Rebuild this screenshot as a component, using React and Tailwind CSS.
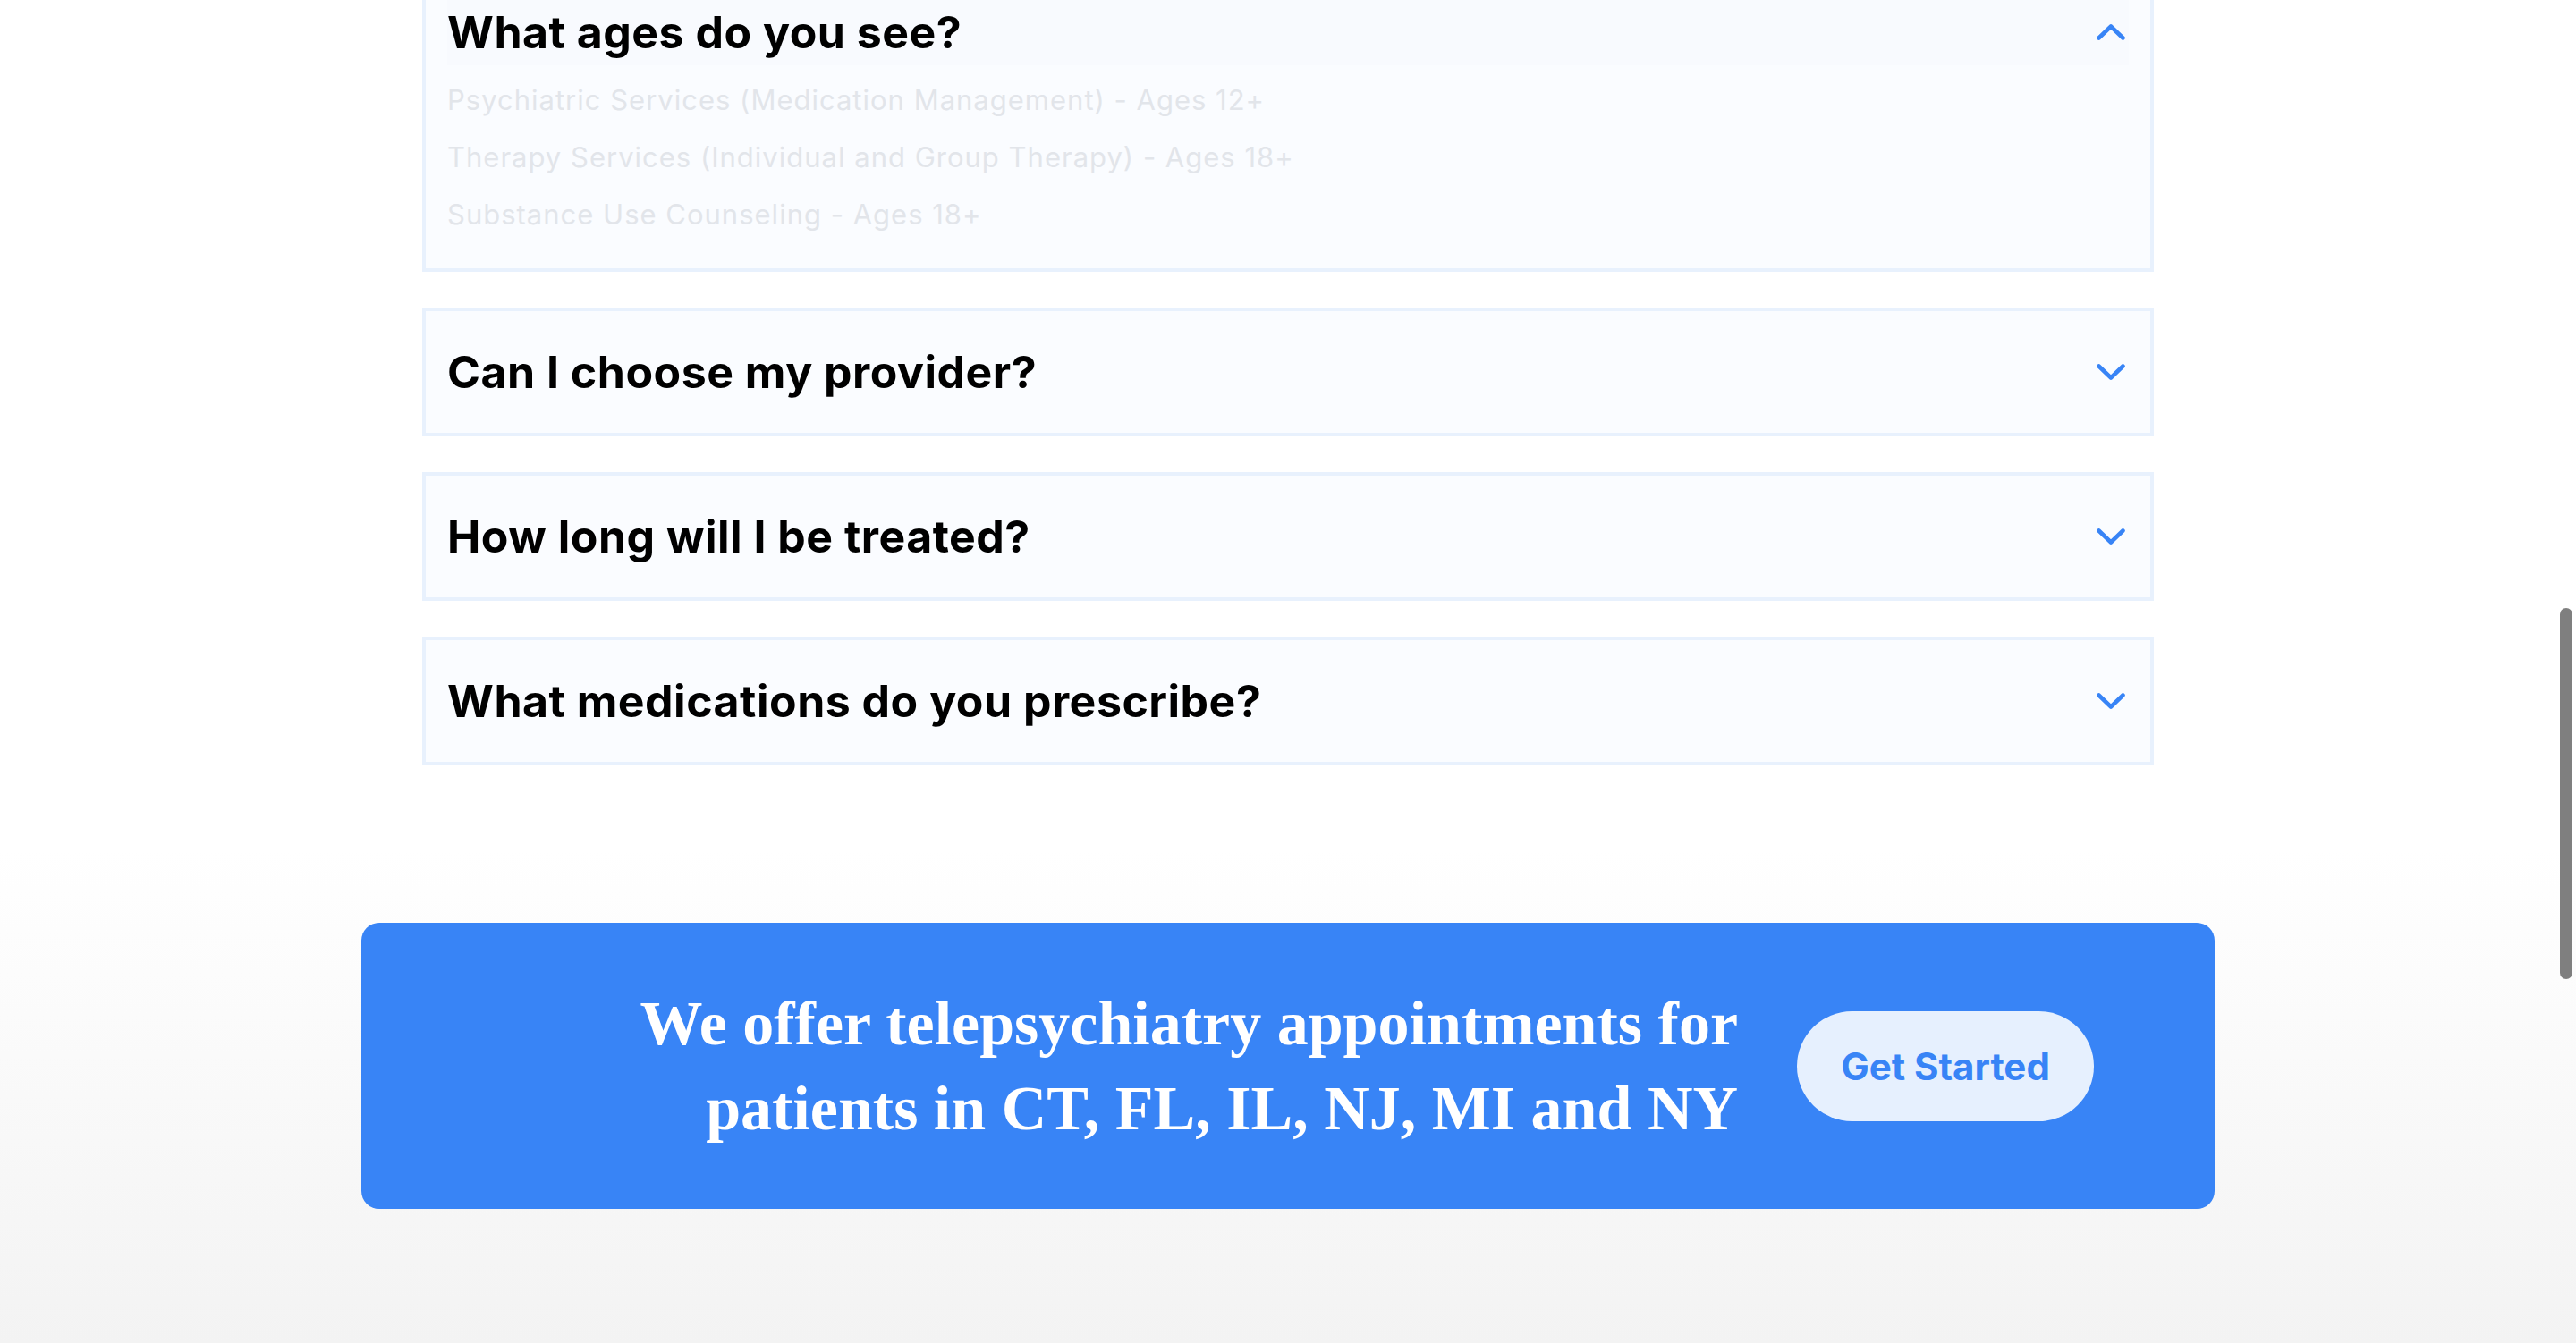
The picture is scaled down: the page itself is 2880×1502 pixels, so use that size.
import React from "react";

const Chevron = ({ up }) => (
  <svg width="32" height="18" viewBox="0 0 32 18" fill="none" className="mr-[4px] shrink-0">
    <polyline
      points={up ? "2.5,15.5 16,2.5 29.5,15.5" : "2.5,2.5 16,15.5 29.5,2.5"}
      stroke="#3884f6"
      strokeWidth="4.6"
      strokeLinecap="round"
      strokeLinejoin="round"
    />
  </svg>
);

const Closed = ({ title }) => (
  <div className="border-4 border-[#e8f1fd] bg-[#fafcff] px-[24px] py-[31px]">
    <div className="flex h-[74px] items-center justify-between">
      <h3 className="[font-family:Inter,sans-serif] text-[50px] font-bold leading-none tracking-[0.5px] text-black">
        {title}
      </h3>
      <Chevron />
    </div>
  </div>
);

export default function App() {
  return (
    <div className="relative h-[1502px] overflow-hidden bg-[linear-gradient(to_bottom,#ffffff_0px,#ffffff_950px,#f3f3f3_1502px)]">
      <div className="mx-auto -mt-[36px] flex w-[1936px] flex-col gap-[40px]">
        <div className="border-4 border-[#e8f1fd] bg-[#fafcff] px-[24px] pt-[31px] pb-[28px]">
          <div className="flex h-[74px] items-center justify-between bg-[#f8fafe]">
            <h3 className="[font-family:Inter,sans-serif] text-[50px] font-bold leading-none tracking-[0.5px] text-black">
              What ages do you see?
            </h3>
            <Chevron up />
          </div>
          <div className="mt-[7px] [font-family:Inter,sans-serif] text-[31px] tracking-[1px] leading-[64px] text-[#e2e5ea]">
            <p>Psychiatric Services (Medication Management) - Ages 12+</p>
            <p>Therapy Services (Individual and Group Therapy) - Ages 18+</p>
            <p>Substance Use Counseling - Ages 18+</p>
          </div>
        </div>
        <Closed title="Can I choose my provider?" />
        <Closed title="How long will I be treated?" />
        <Closed title="What medications do you prescribe?" />
      </div>

      <div className="mx-auto mt-[176px] flex h-[320px] w-[2072px] items-center justify-end gap-[66px] rounded-[20px] bg-[#3884f6] pr-[135px]">
        <p className="text-right [font-family:'Liberation_Serif',serif] text-[70px] font-bold leading-[95px] text-white">
          We offer telepsychiatry appointments for
          <br />
          patients in CT, FL, IL, NJ, MI and NY
        </p>
        <button className="flex h-[123px] w-[332px] shrink-0 items-center justify-center rounded-full bg-[#e6f0fe] [font-family:Inter,sans-serif] text-[42px] font-bold text-[#3884f6]">
          Get Started
        </button>
      </div>

      <div className="fixed right-[4px] top-[680px] h-[415px] w-[14px] rounded-full bg-[#7f7f7f]" />
    </div>
  );
}
